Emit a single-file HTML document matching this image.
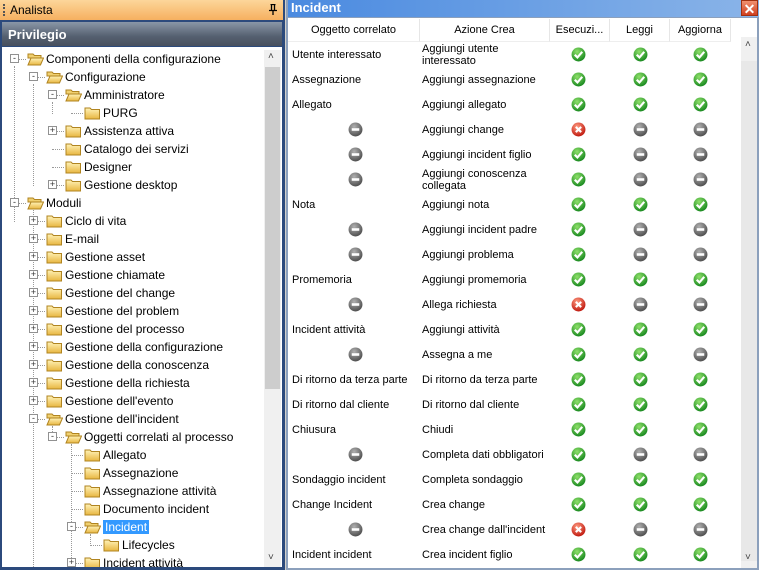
<!DOCTYPE html>
<html><head><meta charset="utf-8"><style>
*{margin:0;padding:0;box-sizing:border-box}
body{width:759px;height:570px;overflow:hidden;background:#d4d0c8;font-family:"Liberation Sans",sans-serif;position:relative}
#left{position:absolute;left:0;top:0;width:285px;height:570px;background:#2c4a7c}
#ahead{position:absolute;left:0;top:0;width:283px;height:20px;background:linear-gradient(#fcd69a,#f6b060);font-size:12px;color:#000;padding:3px 0 0 10px}
#ahead .g{position:absolute;left:3px;top:4px;width:2px;height:12px;border-left:2px dotted #555}
#ahead .pin{position:absolute;right:6px;top:4px}
#phead{position:absolute;left:2px;top:22px;width:280px;height:24px;background:linear-gradient(#8a97a8,#556070 60%,#48505e);color:#fff;font-weight:bold;font-size:13px;padding:5px 0 0 6px}
#tree{position:absolute;left:2px;top:47px;width:280px;height:520px;background:#fff;overflow:hidden}
#lsb{position:absolute;left:264px;top:50px;width:17px;height:517px;background:#f0f0f0}
#lsb .th{position:absolute;left:1px;top:17px;width:15px;height:322px;background:#cdcdcd}
.it{position:absolute;height:18px;font-size:12px;color:#000;white-space:nowrap}
.ex{position:absolute;width:9px;height:9px;border:1px solid #919191;background:#fff;font-size:9px;line-height:7px;text-align:center;color:#333}
.hl{position:absolute;border-top:1px dotted #999;height:0}
.vl{position:absolute;border-left:1px dotted #999;width:0}
.sel{background:#3399ff;color:#fff;padding:0 2px}
#right{position:absolute;left:286px;top:0;width:473px;height:570px;background:#8ca0bc}
#rhead{position:absolute;left:2px;top:0;width:471px;height:17px;background:linear-gradient(90deg,#4a8ae0,#8ab4e8);color:#fff;font-weight:bold;font-size:13px;padding:0 0 0 3px;line-height:16px}
#close{position:absolute;right:1px;top:0;width:17px;height:16px;background:linear-gradient(#f09070,#d04020);color:#fff;font-size:14px;text-align:center;line-height:16px;border:1px solid #a03010}
#tbl{position:absolute;left:2px;top:18px;width:469px;height:550px;background:#fff;overflow:hidden}
.hr{position:absolute;top:1px;height:23px;font-size:11px;line-height:23px;text-align:center;border-right:1px solid #e6e6e6;border-bottom:1px solid #eee;background:#fff;color:#000}
.c{position:absolute;font-size:11px;color:#000;line-height:12px}
.ic{position:absolute;width:15px;height:15px}
#rsb{position:absolute;left:453px;top:19px;width:16px;height:531px;background:#f0f0f0}
#rsb .th{position:absolute;left:0;top:24px;width:16px;height:500px;background:#e8e8e8}
</style></head><body>
<svg width="0" height="0" style="position:absolute"><defs>
<radialGradient id="gg" cx="40%" cy="30%" r="70%"><stop offset="0" stop-color="#8ee06a"/><stop offset="1" stop-color="#1a8a20"/></radialGradient>
<radialGradient id="gr" cx="40%" cy="30%" r="70%"><stop offset="0" stop-color="#ff9a80"/><stop offset="1" stop-color="#c01a10"/></radialGradient>
<radialGradient id="gm" cx="40%" cy="30%" r="70%"><stop offset="0" stop-color="#b0b0b0"/><stop offset="1" stop-color="#505050"/></radialGradient>
<linearGradient id="fo" x1="0" y1="0" x2="0" y2="1"><stop offset="0" stop-color="#fff3b8"/><stop offset="1" stop-color="#e8b640"/></linearGradient>
<symbol id="G" viewBox="0 0 14 14"><circle cx="7" cy="7" r="6.5" fill="url(#gg)"/><path d="M3.5 7.2 L6 9.7 L10.5 4.5" stroke="#fff" stroke-width="2" fill="none"/></symbol>
<symbol id="R" viewBox="0 0 14 14"><circle cx="7" cy="7" r="6.5" fill="url(#gr)"/><path d="M4.5 4.5 L9.5 9.5 M9.5 4.5 L4.5 9.5" stroke="#fff" stroke-width="2"/></symbol>
<symbol id="M" viewBox="0 0 14 14"><circle cx="7" cy="7" r="6.5" fill="url(#gm)"/><rect x="3.5" y="5.8" width="7" height="2.4" fill="#fff"/></symbol>
<symbol id="F" viewBox="0 0 17 14"><path d="M1 2 H6 L7.5 3.5 H15.5 V13 H1 Z" fill="url(#fo)" stroke="#b08420"/></symbol>
<symbol id="O" viewBox="0 0 17 14"><path d="M1 2 H6 L7.5 3.5 H14 V6 H1 Z" fill="#f0d070" stroke="#b08420"/><path d="M1 13 L4 6 H16.5 L13.5 13 Z" fill="url(#fo)" stroke="#b08420"/></symbol>
</defs></svg>

<div id="left">
<div id="ahead"><span class="g"></span>Analista<svg class="pin" width="8" height="11" viewBox="0 0 8 11"><path d="M1.5 0.5 H6.5 M2.5 0.5 V6 M5.5 0.5 V6 M0 6.5 H8 M4 6.5 V11" stroke="#000" stroke-width="1.3" fill="none"/></svg></div>
<div id="phead">Privilegio</div>
<div id="tree">
<div id="tr"></div>
</div>
<div id="lsb"><div class="th"></div><div style="position:absolute;left:4px;top:1px;font-size:10px;color:#444">˄</div><div style="position:absolute;left:4px;top:502px;font-size:10px;color:#444">˅</div></div>
</div>

<div id="right">
<div id="rhead">Incident<div id="close">✕</div></div>
<div id="tbl">
<div class="hr" style="left:0;width:132px">Oggetto correlato</div>
<div class="hr" style="left:132px;width:130px">Azione Crea</div>
<div class="hr" style="left:262px;width:60px">Esecuzi...</div>
<div class="hr" style="left:322px;width:60px">Leggi</div>
<div class="hr" style="left:382px;width:61px">Aggiorna</div>
<div id="rows"></div>
<div id="rsb"><div class="th"></div><div style="position:absolute;left:4px;top:2px;font-size:10px;color:#444">˄</div><div style="position:absolute;left:4px;top:515px;font-size:10px;color:#444">˅</div></div>
</div>
</div>

<script>
var T=[[0,"Componenti della configurazione","-",1],[1,"Configurazione","-",1],[2,"Amministratore","-",1],[3,"PURG","",0],[2,"Assistenza attiva","+",0],[2,"Catalogo dei servizi","",0],[2,"Designer","",0],[2,"Gestione desktop","+",0],[0,"Moduli","-",1],[1,"Ciclo di vita","+",0],[1,"E-mail","+",0],[1,"Gestione asset","+",0],[1,"Gestione chiamate","+",0],[1,"Gestione del change","+",0],[1,"Gestione del problem","+",0],[1,"Gestione del processo","+",0],[1,"Gestione della configurazione","+",0],[1,"Gestione della conoscenza","+",0],[1,"Gestione della richiesta","+",0],[1,"Gestione dell'evento","+",0],[1,"Gestione dell'incident","-",1],[2,"Oggetti correlati al processo","-",1],[3,"Allegato","",0],[3,"Assegnazione","",0],[3,"Assegnazione attività","",0],[3,"Documento incident","",0],[3,"Incident","-",1],[4,"Lifecycles","",0],[3,"Incident attività","+",0]];
var h="";
[[12,19,156],[31,37,102],[50,55,12],[31,163,357],[50,379,12],[69,397,120],[88,487,12]].forEach(function(v){h+='<div class="vl" style="left:'+v[0]+'px;top:'+v[1]+'px;height:'+v[2]+'px"></div>';});
T.forEach(function(t,i){var y=3+i*18,L=t[0],cx=12+19*L;
h+='<div class="hl" style="left:'+cx+'px;top:'+(y+9)+'px;width:12px"></div>';
if(t[2])h+='<div class="ex" style="left:'+(cx-4)+'px;top:'+(y+4)+'px">'+t[2]+'</div>';
h+='<svg style="position:absolute;left:'+(cx+13)+'px;top:'+(y+2)+'px" width="17" height="14"><use href="#'+(t[3]?'O':'F')+'"/></svg>';
h+='<div class="it" style="left:'+(cx+32)+'px;top:'+(y+2)+'px"><span'+(t[1]=="Incident"?' class="sel"':'')+'>'+t[1]+'</span></div>';});
document.getElementById('tr').innerHTML=h;
var R=[["Utente interessato","Aggiungi utente<br>interessato","GGG"],["Assegnazione","Aggiungi assegnazione","GGG"],["Allegato","Aggiungi allegato","GGG"],["","Aggiungi change","RMM"],["","Aggiungi incident figlio","GMM"],["","Aggiungi conoscenza<br>collegata","GMM"],["Nota","Aggiungi nota","GGG"],["","Aggiungi incident padre","GMM"],["","Aggiungi problema","GMM"],["Promemoria","Aggiungi promemoria","GGG"],["","Allega richiesta","RMM"],["Incident attività","Aggiungi attività","GGG"],["","Assegna a me","GGM"],["Di ritorno da terza parte","Di ritorno da terza parte","GGG"],["Di ritorno dal cliente","Di ritorno dal cliente","GGG"],["Chiusura","Chiudi","GGG"],["","Completa dati obbligatori","GMM"],["Sondaggio incident","Completa sondaggio","GGG"],["Change Incident","Crea change","GGG"],["","Crea change dall'incident","RMM"],["Incident incident","Crea incident figlio","GGG"]];
h="";
R.forEach(function(r,i){var cy=36.5+i*25;var two=r[1].indexOf("<br>")>0;
if(r[0])h+='<div class="c" style="left:4px;top:'+(cy-6)+'px">'+r[0]+'</div>';
else h+='<svg class="ic" style="left:60px;top:'+(cy-7.5)+'px"><use href="#M"/></svg>';
h+='<div class="c" style="left:134px;top:'+(cy-(two?12:6))+'px">'+r[1]+'</div>';
[283,345,405].forEach(function(x,j){h+='<svg class="ic" style="left:'+x+'px;top:'+(cy-7.5)+'px"><use href="#'+r[2][j]+'"/></svg>';});});
document.getElementById('rows').innerHTML=h;
</script>
</body></html>
